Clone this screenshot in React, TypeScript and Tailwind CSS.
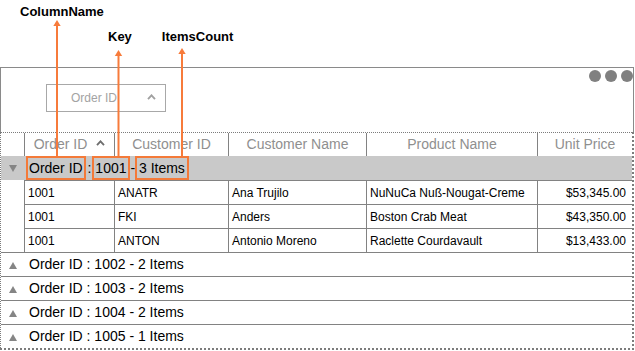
const cols = [
  { key: "id", title: "Order ID", w: "w-[90px]" },
  { key: "cust", title: "Customer ID", w: "w-[114px]" },
  { key: "name", title: "Customer Name", w: "w-[138px]" },
  { key: "prod", title: "Product Name", w: "w-[171px]" },
  { key: "price", title: "Unit Price", w: "flex-1" },
];

const rows = [
  ["1001", "ANATR", "Ana Trujilo", "NuNuCa Nuß-Nougat-Creme", "$53,345.00"],
  ["1001", "FKI", "Anders", "Boston Crab Meat", "$43,350.00"],
  ["1001", "ANTON", "Antonio Moreno", "Raclette Courdavault", "$13,433.00"],
];

const collapsed = [
  ["1002", "2"],
  ["1003", "2"],
  ["1004", "2"],
  ["1005", "1"],
];

function Chevron({ color }: { color: string }) {
  return (
    <svg width="9" height="6" viewBox="0 0 9 6">
      <polyline points="1,5.2 4.5,1.3 8,5.2" fill="none" stroke={color} strokeWidth="1.8" />
    </svg>
  );
}

function TriDown() {
  return (
    <svg width="8" height="7" viewBox="0 0 8 7">
      <polygon points="0,0 8,0 4,7" fill="#858585" />
    </svg>
  );
}

function TriUp() {
  return (
    <svg width="8" height="7" viewBox="0 0 8 7">
      <polygon points="4,0 8,7 0,7" fill="#858585" />
    </svg>
  );
}

function Arrows() {
  const c = "#f77b3b";
  const arrow = (x: number, tip: number) => (
    <g key={x}>
      <line x1={x} y1={tip + 4} x2={x} y2={156} stroke={c} strokeWidth="2" />
      <polygon points={`${x},${tip} ${x + 3.7},${tip + 6} ${x - 3.7},${tip + 6}`} fill={c} />
    </g>
  );
  return (
    <svg className="absolute inset-0 pointer-events-none" width="635" height="351">
      {arrow(57, 20)}
      {arrow(118.5, 50)}
      {arrow(182, 48)}
    </svg>
  );
}

export default function App() {
  const box = "inline-block leading-[20px] outline-2 outline-[#f47a39]";
  return (
    <div
      className="relative w-[635px] h-[351px] bg-white text-black overflow-hidden"
      style={{ fontFamily: '"Liberation Sans", Arial, sans-serif' }}
    >
      {/* annotation labels */}
      <div className="h-[67px] font-bold text-[13px] leading-[15px]">
        <div className="pt-[4px] pl-[20px]">ColumnName</div>
        <div className="flex mt-[10px]">
          <span className="ml-[108px]">Key</span>
          <span className="ml-[30px]">ItemsCount</span>
        </div>
      </div>

      <div className="w-[634px]">
        {/* group drop area */}
        <div className="h-[65px] border border-b-0 border-[#8a8a8a] flex">
          <div className="ml-[45px] mt-[16px] w-[120px] h-[28px] border border-[#a8a8a8] flex items-center pl-[24px] text-[12px] text-[#a3a3a3]">
            <span>Order ID</span>
            <span className="ml-auto mr-[9px] mb-[3px]">
              <Chevron color="#a0a0a0" />
            </span>
          </div>
          <div className="ml-auto mt-[2px] flex gap-[4px] h-[12px]">
            <span className="w-[12px] h-[12px] rounded-full bg-[#808080]" />
            <span className="w-[12px] h-[12px] rounded-full bg-[#808080]" />
            <span className="w-[12px] h-[12px] rounded-full bg-[#808080]" />
          </div>
        </div>

        {/* grid */}
        <div className="border border-r-2 border-b-2 border-dotted border-[#7c7c7c]">
          <div className="flex h-[23px] text-[14px] text-[#8f8f8f] leading-[23px]">
            <div className="w-[23px]" />
            {cols.map((c) => (
              <div key={c.key} className={`${c.w} border-l border-[#828282] flex items-center justify-center`}>
                <span>{c.title}</span>
                {c.key === "id" && (
                  <span className="ml-[9px] mb-[3px]">
                    <Chevron color="#6e6e6e" />
                  </span>
                )}
              </div>
            ))}
          </div>

          <div className="flex items-center h-[24px] bg-[#c9c9c9] text-[14px]">
            <div className="w-[23px] flex justify-center">
              <TriDown />
            </div>
            <div className="pl-[5px] whitespace-pre">
              <span className={`${box} px-[1px] -ml-[1px]`}>Order ID</span>
              <span> : </span>
              <span className={`${box} px-[1px] -mx-[1px]`}>1001</span>
              <span> - </span>
              <span className={`${box} px-[2px] -ml-[2px]`}>3 Items</span>
            </div>
          </div>

          {rows.map((r, i) => (
            <div key={i} className="flex h-[24px] text-[12px]">
              <div className="w-[23px]" />
              {cols.map((c, j) => (
                <div
                  key={c.key}
                  className={`${c.w} border-l border-t border-[#828282] flex items-center ${
                    j === 4 ? "justify-end pr-[6px]" : "pl-[3px]"
                  }`}
                >
                  {r[j]}
                </div>
              ))}
            </div>
          ))}

          {collapsed.map(([id, n]) => (
            <div key={id} className="flex items-center h-[24px] border-t border-[#828282] text-[14px]">
              <div className="w-[23px] flex justify-center pt-[2px]">
                <TriUp />
              </div>
              <div className="pl-[5px] whitespace-pre">{`Order ID : ${id} - ${n} Items`}</div>
            </div>
          ))}
        </div>
      </div>

      <Arrows />
    </div>
  );
}
